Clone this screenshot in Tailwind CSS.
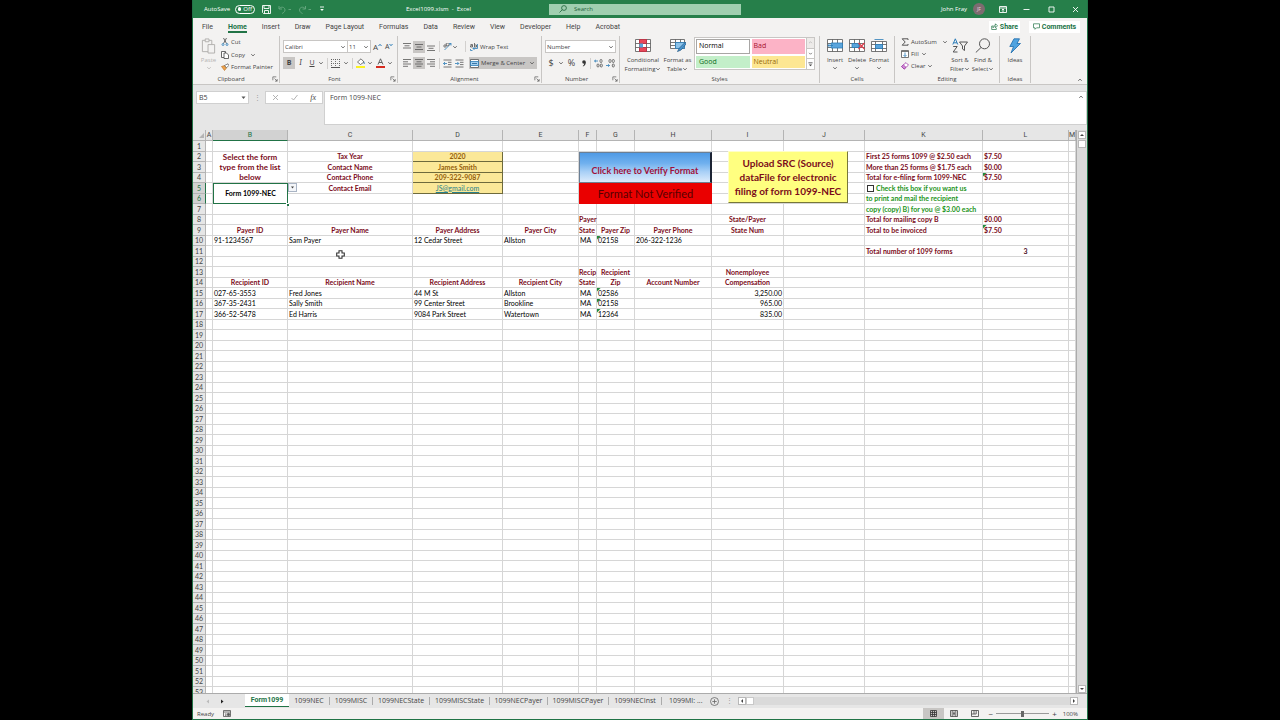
<!DOCTYPE html>
<html lang="en">
<head>
<meta charset="utf-8">
<meta name="viewport" content="width=device-width, initial-scale=1">
<title>Excel1099.xlsm - Excel</title>
<script src="https://cdn.jsdelivr.net/npm/@tailwindcss/browser@4"></script>
</head>
<body class="bg-black font-['Open_Sans','Noto_Sans',sans-serif] text-[7px] leading-[8px] text-[#444]">
<svg class="hidden" aria-hidden="true">
  <symbol id="chev" viewBox="0 0 6 6"><path d="M1.300 2.200L3 3.900 4.700 2.200" fill="none" stroke="currentColor" stroke-width=".8"/></symbol>
  <symbol id="launch" viewBox="0 0 7 7"><path d="M1 5V1h4M3 3l3 3M6 3.500V6H3.500" fill="none" stroke="#555" stroke-width=".8"/></symbol>
</svg>
<div class="mx-auto flex h-screen w-[70%] flex-col overflow-hidden border-x border-b border-[#217346] bg-[#e6e6e6]">

  <!-- Title bar -->
  <header class="flex h-[18px] shrink-0 items-center bg-[#267f4a] text-[6px] text-white">
    <div class="flex w-[178px] shrink-0 items-center pl-[11px]">
      <label for="autosave" class="w-[31px] whitespace-nowrap">AutoSave</label>
      <button id="autosave" role="switch" aria-checked="false" class="flex h-[9px] w-[20px] items-center gap-[2px] rounded-full border border-white px-[2px] leading-none"><span class="size-[4px] rounded-full bg-white"></span>Off</button>
      <button aria-label="Save" class="ml-[7px]"><svg class="size-[9px]" viewBox="0 0 9 9" fill="none" stroke="#fff" stroke-width=".9"><path d="M.5.5h8v8h-7l-1-1zM2 .5v3h5v-3M2.500 8.500v-3h4v3"/></svg></button>
      <button aria-label="Undo" class="ml-[7px] text-[#62a57c]"><svg class="h-[9px] w-[14px]" viewBox="0 0 14 9" fill="none" stroke="currentColor"><path d="M1 1v3h3M1 4c2-3 6-2 6 1 0 2-2 3-3 3.500M10.500 4.500h2.500"/></svg></button>
      <button aria-label="Redo" class="ml-[6px] text-[#62a57c]"><svg class="h-[9px] w-[14px]" viewBox="0 0 14 9" fill="none" stroke="currentColor"><path d="M7.500 1v3h-3M7.500 4c-2-3-6-2-6 1 0 2 2 3 3 3.500M10.500 4.500h2.500"/></svg></button>
      <button aria-label="Customize Quick Access Toolbar" class="ml-[7px]"><svg class="size-[6px]" viewBox="0 0 6 6"><path d="M1 1h4" stroke="#fff" stroke-width=".9"/><path d="M1.200 3h3.600L3 5z" fill="#fff"/></svg></button>
    </div>
    <h1 class="w-[178px] shrink-0 pl-[35px]">Excel1099.xlsm&nbsp; -&nbsp; Excel</h1>
    <div class="flex h-[11px] w-[192px] shrink-0 items-center gap-[7px] bg-[#a0cfb0] pl-[10px] text-[#1d6238]">
      <svg class="size-[8px]" viewBox="0 0 8 8" fill="none" stroke="#1d6238" stroke-width=".8"><circle cx="5" cy="3" r="2.400"/><path d="M3.300 4.700L.5 7.500"/></svg>
      <input type="search" aria-label="Search" placeholder="Search" class="min-w-0 flex-1 bg-transparent outline-none placeholder:text-[#1d6238]">
    </div>
    <div class="ml-auto flex items-center pr-[8px]">
      <span class="mr-[6px]">John Fray</span>
      <span class="mr-[14px] flex size-[12px] items-center justify-center rounded-full bg-[#7d6b70] text-[5px] text-[#e5d5d8]">JF</span>
      <button aria-label="Ribbon Display Options" class="mr-[16px]"><svg class="h-[7px] w-[8px]" viewBox="0 0 8 7" fill="none" stroke="#fff" stroke-width=".9"><path d="M.5.5h7v6h-7zM.5 2h7M4 6V3M2.800 4.200L4 3l1.200 1.200"/></svg></button>
      <button aria-label="Minimize" class="mr-[18px]"><svg class="size-[7px]" viewBox="0 0 7 7" stroke="#fff" stroke-width=".9"><path d="M.5 3.500h6"/></svg></button>
      <button aria-label="Maximize" class="mr-[17px]"><svg class="size-[7px]" viewBox="0 0 7 7" fill="none" stroke="#fff" stroke-width=".9"><path d="M1 1h5v5H1z"/></svg></button>
      <button aria-label="Close"><svg class="size-[7px]" viewBox="0 0 7 7" stroke="#fff" stroke-width=".9"><path d="M1 1l5 5M6 1L1 6"/></svg></button>
    </div>
  </header>

  <!-- Ribbon tabs -->
  <nav class="flex h-[17px] shrink-0 items-center gap-[15px] bg-[#f3f2f1] pl-[9px] pr-[7px] font-['Roboto','Open_Sans',sans-serif] whitespace-nowrap">
    <a href="#">File</a>
    <a href="#" class="flex h-[13px] items-center border-b-2 border-[#217346] pt-[2px] font-bold text-[#217346]">Home</a>
    <a href="#">Insert</a><a href="#">Draw</a><a href="#">Page Layout</a><a href="#">Formulas</a><a href="#">Data</a><a href="#">Review</a><a href="#">View</a><a href="#">Developer</a><a href="#">Help</a><a href="#">Acrobat</a>
    <div class="ml-auto flex gap-[9px] font-bold text-[#217346]">
      <button class="flex h-[12px] w-[31px] items-center justify-center gap-[2px] bg-white"><svg class="size-[7px]" viewBox="0 0 7 7" fill="none" stroke="#217346" stroke-width=".7"><path d="M2 3H.7v3.500h4.600V5M2 4.800c0-2 1-2.600 2.500-2.600V.8l2 2-2 2V3.500C3.500 3.500 2.500 3.800 2 4.800z"/></svg>Share</button>
      <button class="flex h-[12px] w-[51px] items-center justify-center gap-[2px] bg-white"><svg class="size-[7px]" viewBox="0 0 7 7" fill="none" stroke="#217346" stroke-width=".7"><path d="M.5.8h6v4h-3l-1.500 1.500V4.800H.5z"/></svg>Comments</button>
    </div>
  </nav>

  <!-- Ribbon -->
  <div class="flex h-[50px] shrink-0 border-b border-[#c8c6c4] bg-[#f3f2f1] text-[6px] leading-[8px] whitespace-nowrap">
    <section aria-label="Clipboard" class="my-[1px] flex w-[87px] shrink-0 flex-col border-r border-[#c8c6c4]">
      <div class="flex flex-1 pl-[7px]">
        <button class="flex w-[17px] flex-col items-center gap-[1px] pt-[2px] text-[#b5b3b1]"><svg class="h-[16px] w-[15px]" viewBox="0 0 15 17" fill="#f3f2f1" stroke="#b0aeac"><path d="M1 2.500h10v12H1z"/><path d="M4 1h4v3H4zM7 7h7v9H7z"/></svg><span class="pt-[1px]">Paste</span><svg class="size-[6px]"><use href="#chev"/></svg></button>
        <div class="flex flex-col items-start justify-between pt-[2px] pb-[4px] pl-[4px]">
          <button class="flex items-center gap-[2px]"><svg class="size-[8px]" viewBox="0 0 8 8" fill="none" stroke="#444" stroke-width=".8"><path d="M2.500 0l3 5.500M5.500 0l-3 5.500"/><g stroke="#2b7cb8"><circle cx="2" cy="6.500" r="1"/><circle cx="6" cy="6.500" r="1"/></g></svg>Cut</button>
          <button class="flex items-center gap-[2px]"><svg class="size-[8px]" viewBox="0 0 8 8" fill="#fff" stroke="#444" stroke-width=".8"><path d="M.5.5h4v6h-4z"/><path d="M3 2h2.500l2 2v3.500H3z"/></svg>Copy<svg class="ml-[3px] size-[6px]"><use href="#chev"/></svg></button>
          <button class="flex items-center gap-[2px]"><svg class="size-[8px]" viewBox="0 0 8 8"><path d="M.5 3.500l3-1 2 2.500-2 2.500z" fill="#eda34c" stroke="#b86a1c" stroke-width=".6"/><path d="M3.500 2.500L7 .8l.8 1.700L5.500 4.800z" fill="#fff" stroke="#555" stroke-width=".7"/></svg>Format Painter</button>
        </div>
      </div>
      <div class="flex h-[8px] items-center"><span class="flex-1 pr-[3px] text-center">Clipboard</span><button aria-label="Clipboard settings" class="pr-[1px]"><svg class="size-[6px]"><use href="#launch"/></svg></button></div>
    </section>

    <section aria-label="Font" class="my-[1px] flex w-[118px] shrink-0 flex-col border-r border-[#c8c6c4]">
      <div class="flex flex-1 flex-col gap-[4px] pt-[4px] pl-[3px]">
        <div class="flex items-center">
          <label class="flex h-[13px] w-[65px] items-center border border-[#c8c6c4] bg-white pr-[1px] pl-[1px]"><select aria-label="Font name" class="min-w-0 flex-1 appearance-none outline-none"><option>Calibri</option></select><svg class="size-[6px]"><use href="#chev"/></svg></label>
          <label class="flex h-[13px] w-[23px] items-center border border-l-0 border-[#c8c6c4] bg-white px-[1px]"><select aria-label="Font size" class="min-w-0 flex-1 appearance-none outline-none"><option>11</option></select><svg class="size-[6px]"><use href="#chev"/></svg></label>
          <button aria-label="Increase font size" class="ml-[2px] flex w-[12px] items-start text-[8px]">A<svg class="size-[4px]" viewBox="0 0 4 4"><path d="M.5 3L2 1.300 3.500 3" stroke="#2b7cb8" fill="none"/></svg></button>
          <button aria-label="Decrease font size" class="flex w-[11px] items-start text-[7px]">A<svg class="size-[4px]" viewBox="0 0 4 4"><path d="M.5 1L2 2.700 3.500 1" stroke="#2b7cb8" fill="none"/></svg></button>
        </div>
        <div class="flex h-[12px] items-center text-[7px]">
          <button class="h-[12px] w-[12px] bg-[#c8c6c4] font-bold">B</button>
          <button class="w-[11px] font-serif text-[8px] italic">I</button>
          <button class="w-[12px] underline">U</button>
          <svg class="size-[6px]"><use href="#chev"/></svg>
          <span class="mx-[3px] h-[11px] w-px bg-[#d2d0ce]"></span>
          <button aria-label="Borders" class="flex items-center gap-[3px]"><svg class="size-[9px]" viewBox="0 0 9 9" stroke="#555"><path d="M0 8.500h9"/><path d="M.5 0v8M4.500 0v8M8.500 0v8M0 .5h9M0 4.500h9" stroke-dasharray="1 1" stroke-width=".8"/></svg><svg class="size-[6px]"><use href="#chev"/></svg></button>
          <span class="mx-[3px] h-[11px] w-px bg-[#d2d0ce]"></span>
          <button aria-label="Fill colour" class="flex items-center gap-[1px]"><svg class="size-[10px]" viewBox="0 0 10 10"><path d="M1.500 4L5 .8 8 4 4.500 6.500z" fill="#fff" stroke="#555" stroke-width=".8"/><path d="M8 3.500q1.500 2 .3 2.500T8 3.500" fill="#2b7cb8"/><path d="M0 8h9v2H0z" fill="#fbf21f"/></svg><svg class="size-[6px]"><use href="#chev"/></svg></button>
          <button aria-label="Font colour" class="ml-[3px] flex items-center gap-[1px]"><svg class="size-[10px]" viewBox="0 0 10 10"><path d="M2 6.500L4.500.8 7 6.500M3 4.500h3" fill="none" stroke="#555" stroke-width=".9"/><path d="M0 8h9v2H0z" fill="#d62b1f"/></svg><svg class="size-[6px]"><use href="#chev"/></svg></button>
        </div>
      </div>
      <div class="flex h-[8px] items-center"><span class="flex-1 pr-[1px] text-center">Font</span><button aria-label="Font settings" class="pr-[1px]"><svg class="size-[6px]"><use href="#launch"/></svg></button></div>
    </section>

    <section aria-label="Alignment" class="my-[1px] flex w-[144px] shrink-0 flex-col border-r border-[#c8c6c4]">
      <div class="flex flex-1 flex-col gap-[4px] pt-[4px] pl-[3px]">
        <div class="flex h-[13px] items-center">
          <button aria-label="Top align" class="flex size-[12px] items-center justify-center"><svg class="size-[8px]" viewBox="0 0 8 8" stroke="#555" stroke-width=".8"><path d="M0 .5h8M1.500 2.800h5M0 5h8"/></svg></button>
          <button aria-label="Middle align" class="flex size-[12px] items-center justify-center bg-[#c8c6c4]"><svg class="size-[8px]" viewBox="0 0 8 8" stroke="#555" stroke-width=".8"><path d="M0 1.500h8M1.500 4h5M0 6.500h8"/></svg></button>
          <button aria-label="Bottom align" class="flex size-[12px] items-center justify-center"><svg class="size-[8px]" viewBox="0 0 8 8" stroke="#555" stroke-width=".8"><path d="M0 3h8M1.500 5.300h5M0 7.500h8"/></svg></button>
          <span class="mr-[3px] ml-[2px] h-[11px] w-px bg-[#d2d0ce]"></span>
          <button aria-label="Orientation" class="flex items-center"><svg class="size-[9px]" viewBox="0 0 9 9" fill="none" stroke-width=".8"><path d="M1.500 8L8 1.500M6 1.500h2v2" stroke="#2b7cb8"/><circle cx="2" cy="4" r="1.200" stroke="#555"/><path d="M3.300 1v3M4.500 1.500a1.200 1.200 0 1 1-.5 2" stroke="#555"/></svg><svg class="size-[6px]"><use href="#chev"/></svg></button>
          <span class="mr-[4px] ml-[7px] h-[11px] w-px bg-[#d2d0ce]"></span>
          <button class="flex items-center gap-[2px]"><svg class="size-[8px]" viewBox="0 0 8 8" fill="none" stroke-width=".8"><path d="M.5 1.500h2V4H.5V2.700h2M4.500 0v4H6.500V2h-2" stroke="#555"/><path d="M7.500 1v4.500H3M4.500 4L3 5.500 4.500 7M.5 6v1.500h2" stroke="#2b7cb8"/></svg>Wrap Text</button>
        </div>
        <div class="flex h-[12px] items-center">
          <button aria-label="Align left" class="flex size-[12px] items-center justify-center"><svg class="size-[8px]" viewBox="0 0 8 8" stroke="#555" stroke-width=".8"><path d="M0 .5h8M0 2.800h5M0 5h8M0 7.300h5"/></svg></button>
          <button aria-label="Centre" class="flex size-[12px] items-center justify-center bg-[#c8c6c4]"><svg class="size-[8px]" viewBox="0 0 8 8" stroke="#555" stroke-width=".8"><path d="M0 .5h8M1.500 2.800h5M0 5h8M1.500 7.300h5"/></svg></button>
          <button aria-label="Align right" class="flex size-[12px] items-center justify-center"><svg class="size-[8px]" viewBox="0 0 8 8" stroke="#555" stroke-width=".8"><path d="M0 .5h8M3 2.800h5M0 5h8M3 7.300h5"/></svg></button>
          <span class="mr-[3px] ml-[2px] h-[11px] w-px bg-[#d2d0ce]"></span>
          <button aria-label="Decrease indent" class="mr-[3px]"><svg class="size-[9px]" viewBox="0 0 9 9" fill="none" stroke-width=".8"><path d="M.5 1h8M5 3.300h3.500M5 5.600h3.500M.5 8h8" stroke="#555"/><path d="M4 4.500H.5M2 3L.5 4.500 2 6" stroke="#2b7cb8"/></svg></button>
          <button aria-label="Increase indent" class="mr-[5px]"><svg class="size-[9px]" viewBox="0 0 9 9" fill="none" stroke-width=".8"><path d="M.5 1h8M5 3.300h3.500M5 5.600h3.500M.5 8h8" stroke="#555"/><path d="M0 4.500h3.800M2.300 3l1.500 1.500L2.300 6" stroke="#2b7cb8"/></svg></button>
          <button class="flex h-[12px] w-[68px] items-center gap-[2px] bg-[#c8c6c4] pl-[1px]"><svg class="size-[9px]" viewBox="0 0 9 9" fill="none" stroke-width=".8"><path d="M.5.5h8v8h-8z" fill="#fff" stroke="#555"/><path d="M.5 2.500h8v4h-8z" fill="#a6d0ee" stroke="#2b7cb8"/><path d="M2 4.500h5" stroke="#1c5f95"/></svg>Merge &amp; Center<svg class="mr-[2px] ml-auto size-[6px]"><use href="#chev"/></svg></button>
        </div>
      </div>
      <div class="flex h-[8px] items-center"><span class="flex-1 pr-[3px] text-center">Alignment</span><button aria-label="Alignment settings" class="pr-[1px]"><svg class="size-[6px]"><use href="#launch"/></svg></button></div>
    </section>

    <section aria-label="Number" class="my-[1px] flex w-[78px] shrink-0 flex-col border-r border-[#c8c6c4]">
      <div class="flex flex-1 flex-col gap-[4px] pt-[4px] pl-[3px]">
        <label class="flex h-[13px] w-[71px] items-center border border-[#c8c6c4] bg-white px-[1px]"><select aria-label="Number format" class="min-w-0 flex-1 appearance-none outline-none"><option>Number</option></select><svg class="size-[6px]"><use href="#chev"/></svg></label>
        <div class="flex h-[12px] items-center">
          <button class="w-[12px] text-[9px]">$</button>
          <svg class="mx-[1px] size-[6px]"><use href="#chev"/></svg>
          <button class="w-[13px] text-[9px]">%</button>
          <button aria-label="Comma style" class="flex w-[11px] justify-center"><svg class="h-[7px] w-[4px]" viewBox="0 0 4 7"><circle cx="2" cy="2" r="1.800" fill="#333"/><path d="M3.800 2Q3.800 5.500 1 6.500L.8 6Q2.300 5 2.300 3z" fill="#333"/></svg></button>
          <span class="mr-[3px] ml-[1px] h-[11px] w-px bg-[#d2d0ce]"></span>
          <button aria-label="Increase decimal" class="mr-[3px]"><svg class="h-[9px] w-[9px]" viewBox="0 0 9 9" fill="none" stroke-width=".8"><path d="M4 2H.5M2 .8L.5 2 2 3.200" stroke="#2b7cb8"/><rect x="6" y=".5" width="2" height="3" rx="1" stroke="#555"/><rect x="3" y="5" width="2" height="3" rx="1" stroke="#555"/><rect x="6.300" y="5" width="2" height="3" rx="1" stroke="#555"/></svg></button>
          <button aria-label="Decrease decimal"><svg class="h-[9px] w-[9px]" viewBox="0 0 9 9" fill="none" stroke-width=".8"><path d="M0 6.500h3.500M2 5.300l1.500 1.200L2 7.700" stroke="#2b7cb8"/><rect x="3" y=".5" width="2" height="3" rx="1" stroke="#555"/><rect x="6.300" y=".5" width="2" height="3" rx="1" stroke="#555"/><rect x="6.300" y="5" width="2" height="3" rx="1" stroke="#555"/></svg></button>
        </div>
      </div>
      <div class="flex h-[8px] items-center"><span class="flex-1 pr-[1px] text-center">Number</span><button aria-label="Number settings" class="pr-[1px]"><svg class="size-[6px]"><use href="#launch"/></svg></button></div>
    </section>

    <section aria-label="Styles" class="my-[1px] flex w-[200px] shrink-0 flex-col border-r border-[#c8c6c4]">
      <div class="flex flex-1 pl-[5px]">
        <button class="flex w-[36px] flex-col items-center gap-[1px] pt-[3px]"><svg class="h-[13px] w-[16px]" viewBox="0 0 16 13" stroke="#555" stroke-width=".8"><path d="M.5.5h15v12H.5zM.5 4.500h15M.5 8.500h15M4.500.5v12M11.500.5v12" fill="#fff"/><path d="M4.500.5h7v4h-7zM4.500 8.500h7v4h-7z" fill="#e8485a" stroke="#c22c40"/><path d="M4.500 4.500h3.500v4H4.500z" fill="#5ba5dc" stroke="none"/></svg><span class="pt-[3px]">Conditional</span><span class="flex items-center">Formatting<svg class="size-[6px]"><use href="#chev"/></svg></span></button>
        <button class="flex w-[33px] flex-col items-center gap-[1px] pt-[3px]"><svg class="h-[13px] w-[16px]" viewBox="0 0 16 13" stroke="#555" stroke-width=".8"><path d="M.5.5h14v9H.5zM.5 3.500h14M.5 6.500h14M5.500.5v9M10.500.5v9" fill="#fff"/><path d="M5.500 3.500h9v6h-9z" fill="#8cc3ea" stroke="#2b7cb8"/><path d="M15.500 3l-6 6-2 3.500 3.500-1.500 5-6z" fill="#4b97d2" stroke="#2b5f8c"/></svg><span class="pt-[3px]">Format as</span><span class="flex items-center">Table<svg class="size-[6px]"><use href="#chev"/></svg></span></button>
        <div class="mt-[1px] flex h-[33px] border border-[#c8c6c4] bg-white">
          <div class="grid w-[111px] grid-cols-2 gap-[2px] p-px text-[7px]">
            <button class="border border-[#a8a6a4] bg-white pl-[2px] text-left text-black">Normal</button>
            <button class="bg-[#fcb3c6] pl-[2px] text-left text-[#a5132f]">Bad</button>
            <button class="bg-[#c3efc9] pl-[3px] text-left text-[#0d6b1d]">Good</button>
            <button class="bg-[#fde793] pl-[2px] text-left text-[#966708]">Neutral</button>
          </div>
          <div class="flex w-[8px] flex-col divide-y divide-[#c8c6c4] border-l border-[#c8c6c4]">
            <button aria-label="Scroll up" class="flex flex-1 items-center justify-center bg-[#edebe9] text-[#aaa]"><svg class="size-[5px] rotate-180"><use href="#chev"/></svg></button>
            <button aria-label="Scroll down" class="flex flex-1 items-center justify-center"><svg class="size-[5px]"><use href="#chev"/></svg></button>
            <button aria-label="More styles" class="flex flex-1 items-center justify-center"><svg class="size-[5px]" viewBox="0 0 6 6"><path d="M.5 1h5" stroke="#444"/><path d="M1 3h4L3 5.200z" fill="#444"/></svg></button>
          </div>
        </div>
      </div>
      <div class="h-[8px] text-center">Styles</div>
    </section>

    <section aria-label="Cells" class="my-[1px] flex w-[75px] shrink-0 flex-col border-r border-[#c8c6c4]">
      <div class="flex flex-1 pl-[4px]">
        <button class="flex w-[22px] flex-col items-center gap-[1px] pt-[3px]"><svg class="h-[13px] w-[16px]" viewBox="0 0 16 13" stroke="#555" stroke-width=".8"><path d="M.5.5h15v12H.5zM.5 4.500h15M.5 8.500h15M5.500.5v12M10.500.5v12" fill="#fff"/><path d="M4 4h11.500v5H4z" fill="#5ba5dc" stroke="#2b7cb8"/><path d="M6 6.500H.8M3 4.500l-2.200 2L3 8.500" fill="none" stroke="#2b7cb8"/></svg><span class="pt-[3px]">Insert</span><svg class="size-[6px]"><use href="#chev"/></svg></button>
        <button class="flex w-[22px] flex-col items-center gap-[1px] pt-[3px]"><svg class="h-[13px] w-[16px]" viewBox="0 0 16 13" stroke="#555" stroke-width=".8"><path d="M.5.5h15v12H.5zM.5 4.500h15M.5 8.500h15M5.500.5v12M10.500.5v12" fill="#fff"/><path d="M3 4.500h7v4H3z" fill="#5ba5dc" stroke="#2b7cb8"/><path d="M9.500 4l6 6M15.500 4l-6 6" stroke="#e03a4a" stroke-width="1.200"/></svg><span class="pt-[3px]">Delete</span><svg class="size-[6px]"><use href="#chev"/></svg></button>
        <button class="flex w-[22px] flex-col items-center gap-[1px] pt-[3px]"><svg class="h-[13px] w-[16px]" viewBox="0 0 16 13" stroke="#555" stroke-width=".8"><path d="M.5 2.500h15v10H.5zM.5 5.500h15M.5 9.500h15M4.500 2.500v10M11.500 2.500v10" fill="#fff"/><path d="M4.500 5.500h7v4h-7z" fill="#5ba5dc" stroke="#2b7cb8"/><path d="M3.500.5h9" stroke="#2b7cb8"/></svg><span class="pt-[3px]">Format</span><svg class="size-[6px]"><use href="#chev"/></svg></button>
      </div>
      <div class="h-[8px] text-center">Cells</div>
    </section>

    <section aria-label="Editing" class="my-[1px] flex w-[105px] shrink-0 flex-col border-r border-[#c8c6c4]">
      <div class="flex flex-1 pl-[6px]">
        <div class="flex w-[47px] flex-col justify-between pt-[2px] pb-[5px]">
          <button class="flex items-center gap-[2px]"><svg class="size-[8px]" viewBox="0 0 8 8"><path d="M7 2V.8H1.200L4.200 4 1.200 7.200H7V6" fill="none" stroke="#444" stroke-width=".9"/></svg>AutoSum<svg class="ml-auto size-[6px]"><use href="#chev"/></svg></button>
          <button class="flex items-center gap-[2px]"><svg class="size-[8px]" viewBox="0 0 8 8" fill="none" stroke-width=".8"><path d="M.5.5h7v7h-7z" fill="#fff" stroke="#555"/><path d="M.5 1.500h7" stroke="#555"/><path d="M4 2.500v4M2.500 5L4 6.500 5.500 5" stroke="#2b7cb8"/></svg>Fill<svg class="size-[6px]"><use href="#chev"/></svg></button>
          <button class="flex items-center gap-[2px]"><svg class="size-[8px]" viewBox="0 0 8 8" stroke="#a03aa8" stroke-width=".8"><path d="M.6 4.500L5 .6l2.500 2.500-4.400 4z" fill="#fff"/><path d="M.6 4.500l1.800-1.600L5 5.400l-1.900 1.700z" fill="#cf8ad6"/></svg>Clear<svg class="size-[6px]"><use href="#chev"/></svg></button>
        </div>
        <button class="flex w-[24px] flex-col items-center gap-[1px] pt-[2px]"><svg class="h-[15px] w-[16px]" viewBox="0 0 16 15" fill="none" stroke-width="1"><path d="M.8 6.500L3.300.8l2.500 5.700M1.600 4.800h3.400" stroke="#2b7cb8"/><path d="M1.200 8.500h4L1.200 14h4.300M7.500 4h8l-3 4v4.500L10.500 11V8z" stroke="#555"/></svg><span class="pt-[2px]">Sort &amp;</span><span class="flex items-center">Filter<svg class="size-[6px]"><use href="#chev"/></svg></span></button>
        <button class="flex w-[22px] flex-col items-center gap-[1px] pt-[2px]"><svg class="h-[15px] w-[16px]" viewBox="0 0 16 15" fill="none" stroke="#555"><circle cx="9.500" cy="5.800" r="5"/><path d="M6 9.500L.8 14.500"/></svg><span class="pt-[2px]">Find &amp;</span><span class="flex items-center">Select<svg class="size-[6px]"><use href="#chev"/></svg></span></button>
      </div>
      <div class="h-[8px] text-center">Editing</div>
    </section>

    <section aria-label="Ideas" class="my-[1px] flex w-[31px] shrink-0 flex-col border-r border-[#c8c6c4]">
      <button class="flex flex-1 flex-col items-center gap-[1px] pt-[2px]"><svg class="h-[16px] w-[12px]" viewBox="0 0 12 16"><path d="M5 .8h5.500L8 5.500h3.500L2 15l2.500-6.500H.8z" fill="#4fa3e0" stroke="#1f6cab" stroke-width=".8"/></svg><span class="pt-[1px]">Ideas</span></button>
      <div class="h-[8px] text-center">Ideas</div>
    </section>
    <button aria-label="Collapse the Ribbon" class="mt-auto mr-[4px] mb-[1px] ml-auto"><svg class="size-[6px] rotate-180"><use href="#chev"/></svg></button>
  </div>

  <!-- Formula bar -->
  <div class="flex h-[45px] shrink-0 items-start pt-[6px] pb-[5px]">
    <label class="ml-[3px] flex h-[13px] w-[53px] items-center border border-[#d0d0d0] bg-white pr-[2px] pl-[2px]"><input aria-label="Name Box" value="B5" class="min-w-0 flex-1 outline-none"><svg class="size-[5px]" viewBox="0 0 5 5"><path d="M.5 1.500h4L2.500 4z" fill="#555"/></svg></label>
    <span class="flex h-[13px] w-[16px] items-center justify-center text-[#999]">⋮</span>
    <div class="flex h-[13px] w-[58px] items-center justify-around border border-[#d0d0d0] bg-white">
      <button aria-label="Cancel"><svg class="size-[7px]" viewBox="0 0 7 7" stroke="#aaa" stroke-width=".9"><path d="M1 1l5 5M6 1L1 6"/></svg></button>
      <button aria-label="Enter"><svg class="size-[7px]" viewBox="0 0 7 7" fill="none" stroke="#aaa" stroke-width=".9"><path d="M.5 4l2 2L6.500 1"/></svg></button>
      <button class="font-['Liberation_Serif',serif] text-[8px] italic">fx</button>
    </div>
    <div class="ml-[1px] flex h-[34px] flex-1 items-start border border-[#d0d0d0] bg-white">
      <textarea aria-label="Formula Bar" rows="3" class="h-[30px] min-w-0 flex-1 resize-none overflow-hidden pt-[2px] pl-[5px] outline-none">Form 1099-NEC</textarea>
      <button aria-label="Collapse Formula Bar" class="p-[2px]"><svg class="size-[6px] rotate-180"><use href="#chev"/></svg></button>
    </div>
  </div>

  <!-- Worksheet -->
  <main class="flex min-h-0 flex-1">
    <div class="relative min-w-0 flex-1 overflow-hidden border-r border-[#ababab] bg-white font-['Lato','Open_Sans',sans-serif] text-[7px]">
      <table class="w-full table-fixed border-separate border-spacing-0 leading-[9px] text-black">
        <colgroup>
          <col class="w-[13px]"><col class="w-[7px]"><col class="w-[75px]"><col class="w-[125px]"><col class="w-[90px]"><col class="w-[76px]"><col class="w-[18px]"><col class="w-[38px]"><col class="w-[77px]"><col class="w-[72px]"><col class="w-[81px]"><col class="w-[118px]"><col class="w-[86px]"><col>
        </colgroup>
        <thead><tr id="heads" class="h-[11px]"></tr></thead>
        <tbody id="rows"></tbody>
      </table>
      <button class="absolute top-[21px] left-[535px] h-[52px] w-[120px] border border-t-[#ffffc8] border-r-[#77773a] border-b-[#77773a] border-l-[#ffffc8] bg-[#ffff80] text-[10px] leading-[14px] font-bold whitespace-nowrap text-[#7b0c1a]">Upload SRC (Source)<br>dataFile for electronic<br>filing of form 1099-NEC</button>
      <button aria-label="Open list" class="absolute top-[53px] left-[95px] flex h-[9px] w-[9px] items-center justify-center border border-[#a9b4c4] bg-[#f4f6f9]"><svg class="size-[5px]" viewBox="0 0 5 5"><path d="M1 1.500h3L2.500 3.500z" fill="#444"/></svg></button>
      <span class="absolute top-[73px] left-[93px] size-[3px] border-t border-l border-white bg-[#217346]"></span>
      <svg class="absolute top-[120px] left-[143px] size-[9px]" viewBox="0 0 9 9"><path d="M3 .7h3V3h2.300v3H6v2.300H3V6H.7V3H3z" fill="#fff" stroke="#333" stroke-width="1.100"/></svg>
    </div>
    <div class="flex w-[10px] shrink-0 flex-col items-center bg-[#dadada] pt-[1px]">
      <button aria-label="Scroll up" class="flex size-[8px] items-center justify-center border border-[#b8b8b8] bg-white"><svg class="size-[4px]" viewBox="0 0 4 4"><path d="M0 3h4L2 1z" fill="#444"/></svg></button>
      <span class="mt-[1px] h-[8px] w-[8px] border border-[#b8b8b8] bg-white"></span>
      <button aria-label="Scroll down" class="mt-auto flex size-[8px] items-center justify-center border border-[#b8b8b8] bg-white"><svg class="size-[4px]" viewBox="0 0 4 4"><path d="M0 1h4L2 3z" fill="#444"/></svg></button>
    </div>
  </main>

  <!-- Sheet tabs -->
  <nav aria-label="Sheets" class="flex h-[15px] shrink-0 items-center border-t border-[#ababab] whitespace-nowrap">
    <button aria-label="Previous sheet" class="ml-[12px]"><svg class="size-[5px]" viewBox="0 0 5 5"><path d="M4 .5v4L1.500 2.500z" fill="#bbb"/></svg></button>
    <button aria-label="Next sheet" class="mr-[20px] ml-[10px]"><svg class="size-[5px]" viewBox="0 0 5 5"><path d="M1 .5v4l2.500-2z" fill="#222"/></svg></button>
    <a href="#" class="flex h-[13px] w-[44px] items-center justify-center self-start border-b border-[#217346] bg-white font-['Roboto','Open_Sans',sans-serif] font-bold text-[#217346]">Form1099</a>
    <a href="#" class="w-[41px] border-r border-[#ababab] text-center">1099NEC</a>
    <a href="#" class="w-[43px] border-r border-[#ababab] text-center">1099MISC</a>
    <a href="#" class="w-[57px] border-r border-[#ababab] text-center">1099NECState</a>
    <a href="#" class="w-[60px] border-r border-[#ababab] text-center">1099MISCState</a>
    <a href="#" class="w-[58px] border-r border-[#ababab] text-center">1099NECPayer</a>
    <a href="#" class="w-[61px] border-r border-[#ababab] text-center">1099MISCPayer</a>
    <a href="#" class="w-[53px] border-r border-[#ababab] text-center">1099NECInst</a>
    <a href="#" aria-label="1099MISCInst" class="w-[35px] pl-[7px]">1099MI:</a>
    <span class="w-[7px]">...</span>
    <button aria-label="New sheet" class="ml-[6px]"><svg class="size-[9px]" viewBox="0 0 9 9" fill="none" stroke="#666" stroke-width=".8"><circle cx="4.500" cy="4.500" r="4"/><path d="M4.500 2.300v4.400M2.300 4.500h4.400"/></svg></button>
    <span class="mr-[5px] ml-[7px] text-[#999]">⋮</span>
    <div class="mr-[9px] flex h-[8px] flex-1 items-center bg-[#dadada]">
      <button aria-label="Scroll left" class="flex size-[8px] items-center justify-center border border-[#b8b8b8] bg-white"><svg class="size-[4px]" viewBox="0 0 4 4"><path d="M3 0v4L1 2z" fill="#444"/></svg></button>
      <span class="h-[8px] w-[8px] border border-[#c8c8c8] bg-white"></span>
      <button aria-label="Scroll right" class="ml-auto flex size-[8px] items-center justify-center border border-[#b8b8b8] bg-white"><svg class="size-[4px]" viewBox="0 0 4 4"><path d="M1 0v4l2-2z" fill="#444"/></svg></button>
    </div>
  </nav>

  <!-- Status bar -->
  <footer class="flex h-[11px] shrink-0 items-center bg-[#f3f2f1] pr-[9px] text-[6px]">
    <span class="pl-[4px]">Ready</span>
    <button aria-label="Record macro" class="ml-[9px]"><svg class="h-[7px] w-[8px]" viewBox="0 0 8 7" fill="none" stroke="#555" stroke-width=".8"><path d="M.5.5h7v6h-7zM.5 2h7M2 4h1.500M2 5.300h1.500"/><circle cx="5.500" cy="4.500" r="1.200" fill="#555"/></svg></button>
    <div class="ml-auto flex h-full items-center">
      <button aria-label="Normal view" class="flex h-full w-[21px] items-center justify-center bg-[#c8c6c4]"><svg class="size-[7px]" viewBox="0 0 7 7" fill="none" stroke="#333" stroke-width=".8"><path d="M.5.5h6v6h-6zM.5 2.500h6M.5 4.500h6M2.500.5v6M4.500.5v6"/></svg></button>
      <button aria-label="Page layout view" class="flex h-full w-[21px] items-center justify-center"><svg class="h-[7px] w-[8px]" viewBox="0 0 8 7" fill="none" stroke="#444" stroke-width=".8"><path d="M.5.5h7v6h-7zM2.200.5v6M5.800.5v6M3 2.200h2M3 3.500h2M3 4.800h2"/></svg></button>
      <button aria-label="Page break preview" class="flex h-full w-[21px] items-center justify-center"><svg class="h-[7px] w-[8px]" viewBox="0 0 8 7" fill="none" stroke="#444" stroke-width=".8"><path d="M.5.5h7v6h-7zM3 .5v3.500M5.200.5v3.500M.5 4h4.700"/></svg></button>
      <button aria-label="Zoom out" class="ml-[3px] text-[8px]">−</button>
      <input type="range" aria-label="Zoom" value="50" class="mx-[3px] h-[7px] w-[53px] appearance-none bg-[linear-gradient(#999,#999)] bg-[length:100%_1px] bg-center bg-no-repeat [&::-webkit-slider-thumb]:h-[6px] [&::-webkit-slider-thumb]:w-[3px] [&::-webkit-slider-thumb]:appearance-none [&::-webkit-slider-thumb]:bg-[#666]">
      <button aria-label="Zoom in" class="text-[8px]">+</button>
      <span class="ml-[6px]">100%</span>
    </div>
  </footer>
</div>

<script>
const COLS = ['A','B','C','D','E','F','G','H','I','J','K','L','M'];
const HEAD = 'overflow-hidden border-r border-b border-[#b4b4b4] bg-[#e6e6e6] p-0 text-center font-["Roboto",sans-serif] font-normal text-[#444]';
const HEAD_ON = 'overflow-hidden border-r border-b border-[#b4b4b4] border-b-[#217346] bg-[#d2d2d2] p-0 text-center font-["Roboto",sans-serif] font-normal text-[#217346]';
const ROW_HEAD = 'overflow-hidden border-r border-b border-[#b4b4b4] bg-[#e6e6e6] p-0 text-center font-normal text-[#444]';
const ROW_ON = 'overflow-hidden border-r border-b border-[#b4b4b4] border-r-[#217346] bg-[#d2d2d2] p-0 text-center font-normal text-[#217346]';
const STYLE = {
  plain: 'border-r border-b border-[#d6d6d6] p-0 pl-px whitespace-nowrap',
  head: 'border-r border-b border-[#d6d6d6] p-0 text-center font-bold whitespace-nowrap text-[#7b0c1a]',
  fhead: 'border-r border-b border-[#d6d6d6] p-0 font-bold whitespace-nowrap text-[#7b0c1a]',
  left: 'border-r border-b border-[#d6d6d6] p-0 pl-px font-bold whitespace-nowrap text-[#7b0c1a]',
  flag: 'border-r border-b border-[#d6d6d6] bg-[linear-gradient(135deg,#1e8a3c_2px,transparent_3px)] p-0 pl-px whitespace-nowrap',
  flagBold: 'border-r border-b border-[#d6d6d6] bg-[linear-gradient(135deg,#1e8a3c_2px,transparent_3px)] p-0 pl-px font-bold whitespace-nowrap text-[#7b0c1a]',
  green: 'border-r border-b border-[#d6d6d6] p-0 pl-px font-bold whitespace-nowrap text-[#1c9420]',
  num: 'border-r border-b border-[#d6d6d6] p-0 pr-px text-right whitespace-nowrap',
  count: 'border-r border-b border-[#d6d6d6] p-0 text-center font-bold whitespace-nowrap text-[#4a0d1c]',
  input: 'border-r border-b border-[#6e6a3c] bg-[#fbe898] p-0 text-center font-bold whitespace-nowrap text-[#95600b]',
  title: 'border-r border-b border-[#d6d6d6] p-0 text-center text-[8px] leading-[10px] font-bold text-[#7b0c1a]',
  pick: 'border border-[#217346] p-0 text-center font-bold',
  verify: 'p-0',
  red: 'bg-[#ea0000] p-0 text-center text-[11px] leading-[12px] text-[#570000]'
};
// cell address -> [style, content, colspan, rowspan]
const CELLS = {
  B2: ['title', 'Select the form<br>type from the list<br>below', 1, 3],
  C2: ['head', 'Tax Year'], D2: ['input', '2020'],
  C3: ['head', 'Contact Name'], D3: ['input', 'James Smith'],
  C4: ['head', 'Contact Phone'], D4: ['input', '209-322-9087'],
  C5: ['head', 'Contact Email'], D5: ['input', '<a href="#" class="font-normal text-[#27808c] underline">JS@gmail.com</a>'],
  B5: ['pick', '<select aria-label="Form type" class="block w-full appearance-none text-center leading-[9px] outline-none"><option>Form 1099-NEC</option></select>', 1, 2],
  F2: ['verify', '<button class="block h-[31px] w-full border border-t-[#6a7f95] border-r-2 border-r-[#1c2434] border-b-[#6f7f90] border-l-[#6a7f95] bg-[linear-gradient(#4f9ae5,#6fb0ee_35%,#a9d0f6_65%,#dcebfb)] pt-[6px] text-[9px] font-bold whitespace-nowrap text-[#a0103a]">Click here to Verify Format</button>', 3, 3],
  F5: ['red', 'Format Not Verified', 3, 2],
  K2: ['left', 'First 25 forms 1099 @ $2.50 each'], L2: ['left', '$7.50'],
  K3: ['left', 'More than 25 forms @ $1.75 each'], L3: ['left', '$0.00'],
  K4: ['left', 'Total for e-filing form 1099-NEC'], L4: ['flagBold', '$7.50'],
  K5: ['green', '<span class="flex h-[9px] items-center gap-[2px]"><input id="mail" type="checkbox" class="ml-px size-[7px] appearance-none border border-[#333] bg-white"><label for="mail">Check this box if you want us</label></span>'],
  K6: ['green', '<label for="mail">to print and mail the recipient</label>'],
  K7: ['green', '<label for="mail">copy (copy) B) for you @ $3.00 each</label>'],
  F8: ['fhead', 'Payer'], I8: ['head', 'State/Payer'],
  K8: ['left', 'Total for mailing copy B'], L8: ['left', '$0.00'],
  B9: ['head', 'Payer ID'], C9: ['head', 'Payer Name'], D9: ['head', 'Payer Address'], E9: ['head', 'Payer City'],
  F9: ['fhead', 'State'], G9: ['head', 'Payer Zip'], H9: ['head', 'Payer Phone'], I9: ['head', 'State Num'],
  K9: ['left', 'Total to be invoiced'], L9: ['flagBold', '$7.50'],
  B10: ['plain', '91-1234567'], C10: ['plain', 'Sam Payer'], D10: ['plain', '12 Cedar Street'], E10: ['plain', 'Allston'],
  F10: ['plain', 'MA'], G10: ['flag', '02158'], H10: ['plain', '206-322-1236'],
  K11: ['left', 'Total number of 1099 forms'], L11: ['count', '3'],
  F13: ['fhead', 'Recip'], G13: ['head', 'Recipient'], I13: ['head', 'Nonemployee'],
  B14: ['head', 'Recipient ID'], C14: ['head', 'Recipient Name'], D14: ['head', 'Recipient Address'], E14: ['head', 'Recipient City'],
  F14: ['fhead', 'State'], G14: ['head', 'Zip'], H14: ['head', 'Account Number'], I14: ['head', 'Compensation'],
  B15: ['plain', '027-65-3553'], C15: ['plain', 'Fred Jones'], D15: ['plain', '44 M St'], E15: ['plain', 'Allston'], F15: ['plain', 'MA'], G15: ['flag', '02586'], I15: ['num', '3,250.00'],
  B16: ['plain', '367-35-2431'], C16: ['plain', 'Sally Smith'], D16: ['plain', '99 Center Street'], E16: ['plain', 'Brookline'], F16: ['plain', 'MA'], G16: ['flag', '02158'], I16: ['num', '965.00'],
  B17: ['plain', '366-52-5478'], C17: ['plain', 'Ed Harris'], D17: ['plain', '9084 Park Street'], E17: ['plain', 'Watertown'], F17: ['plain', 'MA'], G17: ['flag', '12364'], I17: ['num', '835.00']
};
document.getElementById('heads').innerHTML =
  `<th class='${HEAD}'><svg class="ml-auto size-[7px]" viewBox="0 0 7 7"><path d="M6 1v5H1z" fill="#b4b4b4"/></svg></th>` +
  COLS.map(c => `<th scope="col" class='${c === 'B' ? HEAD_ON : HEAD}'>${c}</th>`).join('');
const covered = new Set();
let html = '';
for (let r = 1; r <= 53; r++) {
  html += `<tr class="${r % 2 ? 'h-[11px]' : 'h-[10px]'}"><th scope="row" class="${r === 5 || r === 6 ? ROW_ON : ROW_HEAD}">${r}</th>`;
  COLS.forEach((c, i) => {
    if (covered.has(c + r)) return;
    const [style, text, cs = 1, rs = 1] = CELLS[c + r] || ['plain', ''];
    for (let y = 0; y < rs; y++) for (let x = 0; x < cs; x++) covered.add(COLS[i + x] + (r + y));
    html += `<td class="${STYLE[style]}" colspan="${cs}" rowspan="${rs}">${text}</td>`;
  });
  html += '</tr>';
}
document.getElementById('rows').innerHTML = html;
</script>
</body>
</html>
